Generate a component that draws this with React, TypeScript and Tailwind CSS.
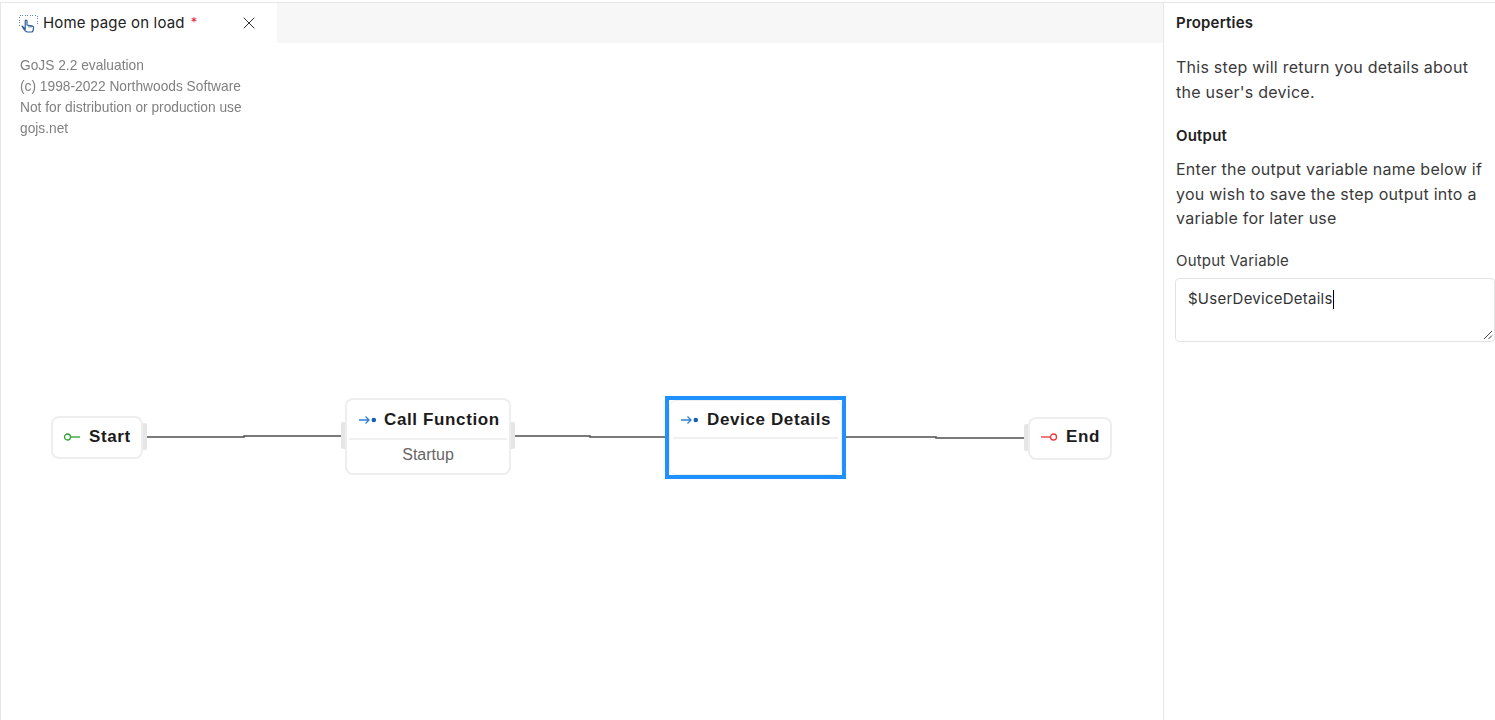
import React from 'react';
import { X } from 'lucide-react';

const inter = { fontFamily: 'Inter, sans-serif' };
const arial = { fontFamily: '"Liberation Sans", Arial, sans-serif' };

const TabIcon = () => (
  <svg width="20" height="20" viewBox="0 0 20 20" fill="none">
    <path d="M1.500 12.500V2.500H19V12.500" stroke="#5b85b5" strokeWidth="1" strokeDasharray="1 1.500" shapeRendering="crispEdges" />
    <path d="M4 13c1 .8 2 2 3.200 3V8c0-1.200 1.800-1.200 1.800 0v4l5.500 1.200c.8.200 1.200.8 1.100 1.500l-.5 2.800c-.2.900-.7 1.500-1.600 1.500H9.500c-2 0-3.500-2.200-5.500-6z" fill="#fff" stroke="#2b5c94" strokeWidth="1.200" strokeLinejoin="round" />
    <path d="M11 12v2.500M13 12.500v2" stroke="#2b5c94" strokeWidth="1" />
  </svg>
);

const StepIcon = () => (
  <svg width="20" height="10" viewBox="0 0 20 10" fill="none" className="shrink-0">
    <path d="M1 5h10M7.500 1.500 11 5 7.500 8.500" stroke="#2f7fd6" strokeWidth="1.300" />
    <circle cx="15.800" cy="5" r="2.300" fill="#1560b5" />
  </svg>
);

const Handle = ({ className }: { className: string }) => (
  <div className={`absolute w-[4px] bg-[#e6e6e6] ${className}`} />
);

const Wire = ({ x1, x2, xm, y1, y2 }: { x1: number; x2: number; xm: number; y1: number; y2: number }) => (
  <path d={`M${x1} ${y1}H${xm}V${y2}H${x2}`} stroke="#4f4f4f" strokeWidth="1.500" fill="none" />
);

const App: React.FC = () => {
  return (
    <div className="h-[720px] w-[1495px] overflow-hidden bg-white pt-[2px]" style={inter}>
      <div className="flex h-[718px] border-t border-[#e6e6e6]">
        {/* Canvas side */}
        <div className="flex w-[1164px] shrink-0 flex-col border-l border-r border-[#e6e6e6]">
          <div className="flex h-[40px] bg-[#f7f7f7]">
            <div className="flex w-[276px] items-center bg-white pl-[17px]">
              <TabIcon />
              <span className="ml-[5px] text-[15px] tracking-[0.18px] text-[#222]">Home page on load</span>
              <span className="ml-[6px] text-[13px] text-[#e5243b]">*</span>
              <X size={20} strokeWidth={1.200} className="ml-auto mr-[18px] text-[#333]" />
            </div>
          </div>

          <div className="relative flex-1" style={arial}>
            <div className="absolute left-[19px] top-[12px] text-[13.750px] leading-[21px] text-[#808080] blur-[0.5px]">
              <div>GoJS 2.2 evaluation</div>
              <div>(c) 1998-2022 Northwoods Software</div>
              <div>Not for distribution or production use</div>
              <div>gojs.net</div>
            </div>

            <svg width="1162" height="675" className="absolute left-0 top-0">
              <Wire x1={146} x2={340} xm={243} y1={394} y2={393} />
              <Wire x1={514} x2={664} xm={589} y1={393} y2={394} />
              <Wire x1={845} x2={1023} xm={935} y1={394} y2={395} />
            </svg>

            {/* Start */}
            <div className="absolute left-[50px] top-[373px] h-[43px] w-[92px] rounded-[8px] border-2 border-[#eeeeee] bg-white">
              <div className="flex h-full items-center pb-[2px] pl-[10px]">
                <svg width="18" height="10" viewBox="0 0 18 10" fill="none" className="shrink-0">
                  <circle cx="4.500" cy="5" r="3" stroke="#2ea02e" strokeWidth="1.300" />
                  <path d="M7.500 5H17" stroke="#2ea02e" strokeWidth="1.300" />
                </svg>
                <span className="ml-[8px] text-[17px] font-bold tracking-[0.63px] text-[#1c1c1c]">Start</span>
              </div>
              <Handle className="left-[90px] top-[5px] h-[27px] rounded-r-[2px]" />
            </div>

            {/* Call Function */}
            <div className="absolute left-[344px] top-[355px] h-[77px] w-[166px] rounded-[8px] border-2 border-[#eeeeee] bg-white">
              <div className="mx-[2px] flex h-[40px] items-center border-b-2 border-[#f0f0f0] pl-[9px] pt-[1px]">
                <StepIcon />
                <span className="ml-[6px] text-[17px] font-bold tracking-[0.63px] text-[#1c1c1c]">Call Function</span>
              </div>
              <div className="pt-[3px] text-center text-[16px] leading-[24px] text-[#666]">Startup</div>
              <Handle className="left-[-6px] top-[22px] h-[27px] rounded-l-[2px]" />
              <Handle className="left-[164px] top-[22px] h-[27px] rounded-r-[2px]" />
            </div>

            {/* Device Details, selected */}
            <div className="absolute left-[664px] top-[353px] h-[83px] w-[181px] border-[4px] border-[#1e90ff] bg-white">
              <div className="h-full rounded-[7px] border border-[#eeeeee]">
                <div className="mx-[3px] flex h-[38px] items-center border-b-2 border-[#f0f0f0] pl-[7px] pt-[2px]">
                  <StepIcon />
                  <span className="ml-[7px] text-[17px] font-bold tracking-[0.63px] text-[#1c1c1c]">Device Details</span>
                </div>
              </div>
            </div>

            {/* End */}
            <div className="absolute left-[1027px] top-[374px] h-[43px] w-[84px] rounded-[8px] border-2 border-[#eeeeee] bg-white">
              <div className="flex h-full items-center pb-[3px] pl-[10px]">
                <svg width="18" height="10" viewBox="0 0 18 10" fill="none" className="shrink-0">
                  <path d="M1 5h10" stroke="#f0353b" strokeWidth="1.300" />
                  <circle cx="13.500" cy="5" r="3" stroke="#f0353b" strokeWidth="1.300" />
                </svg>
                <span className="ml-[8px] text-[17px] font-bold tracking-[0.63px] text-[#1c1c1c]">End</span>
              </div>
              <Handle className="left-[-6px] top-[5px] h-[27px] rounded-l-[2px]" />
            </div>
          </div>
        </div>

        {/* Properties */}
        <div className="min-w-0 flex-1 pl-[12px] text-[#3a3a3a]">
          <div className="mt-[11px] text-[15px] font-semibold leading-[17px] tracking-[0.2px] text-[#222]">Properties</div>
          <p className="mt-[24px] w-[312px] text-[16px] leading-[25px] tracking-[0.25px]">This step will return you details about the user's device.</p>
          <div className="mt-[22px] text-[15px] font-semibold leading-[17px] tracking-[0.2px] text-[#222]">Output</div>
          <p className="mt-[13px] w-[312px] text-[16px] leading-[24.500px] tracking-[0.25px]">Enter the output variable name below if you wish to save the step output into a variable for later use</p>
          <div className="mt-[21px] text-[15px] leading-[17px] tracking-[0.2px]">Output Variable</div>
          <div className="relative ml-[-1px] mt-[9px] h-[64px] w-[320px] rounded-[4px] border border-[#e3e3e3] pl-[12px] pt-[11px]">
            <div className="flex h-[20px] items-center text-[15px] tracking-[0.25px] text-[#333]">
              $UserDeviceDetails
              <span className="h-[19px] w-[1.500px] bg-black" />
            </div>
            <svg width="10" height="10" viewBox="0 0 10 10" className="absolute bottom-[1px] right-[1px]" fill="none">
              <path d="M1 9 9 1M5.500 9 9 5.500" stroke="#444" strokeWidth="1" />
            </svg>
          </div>
        </div>
      </div>
    </div>
  );
};

export default App;
